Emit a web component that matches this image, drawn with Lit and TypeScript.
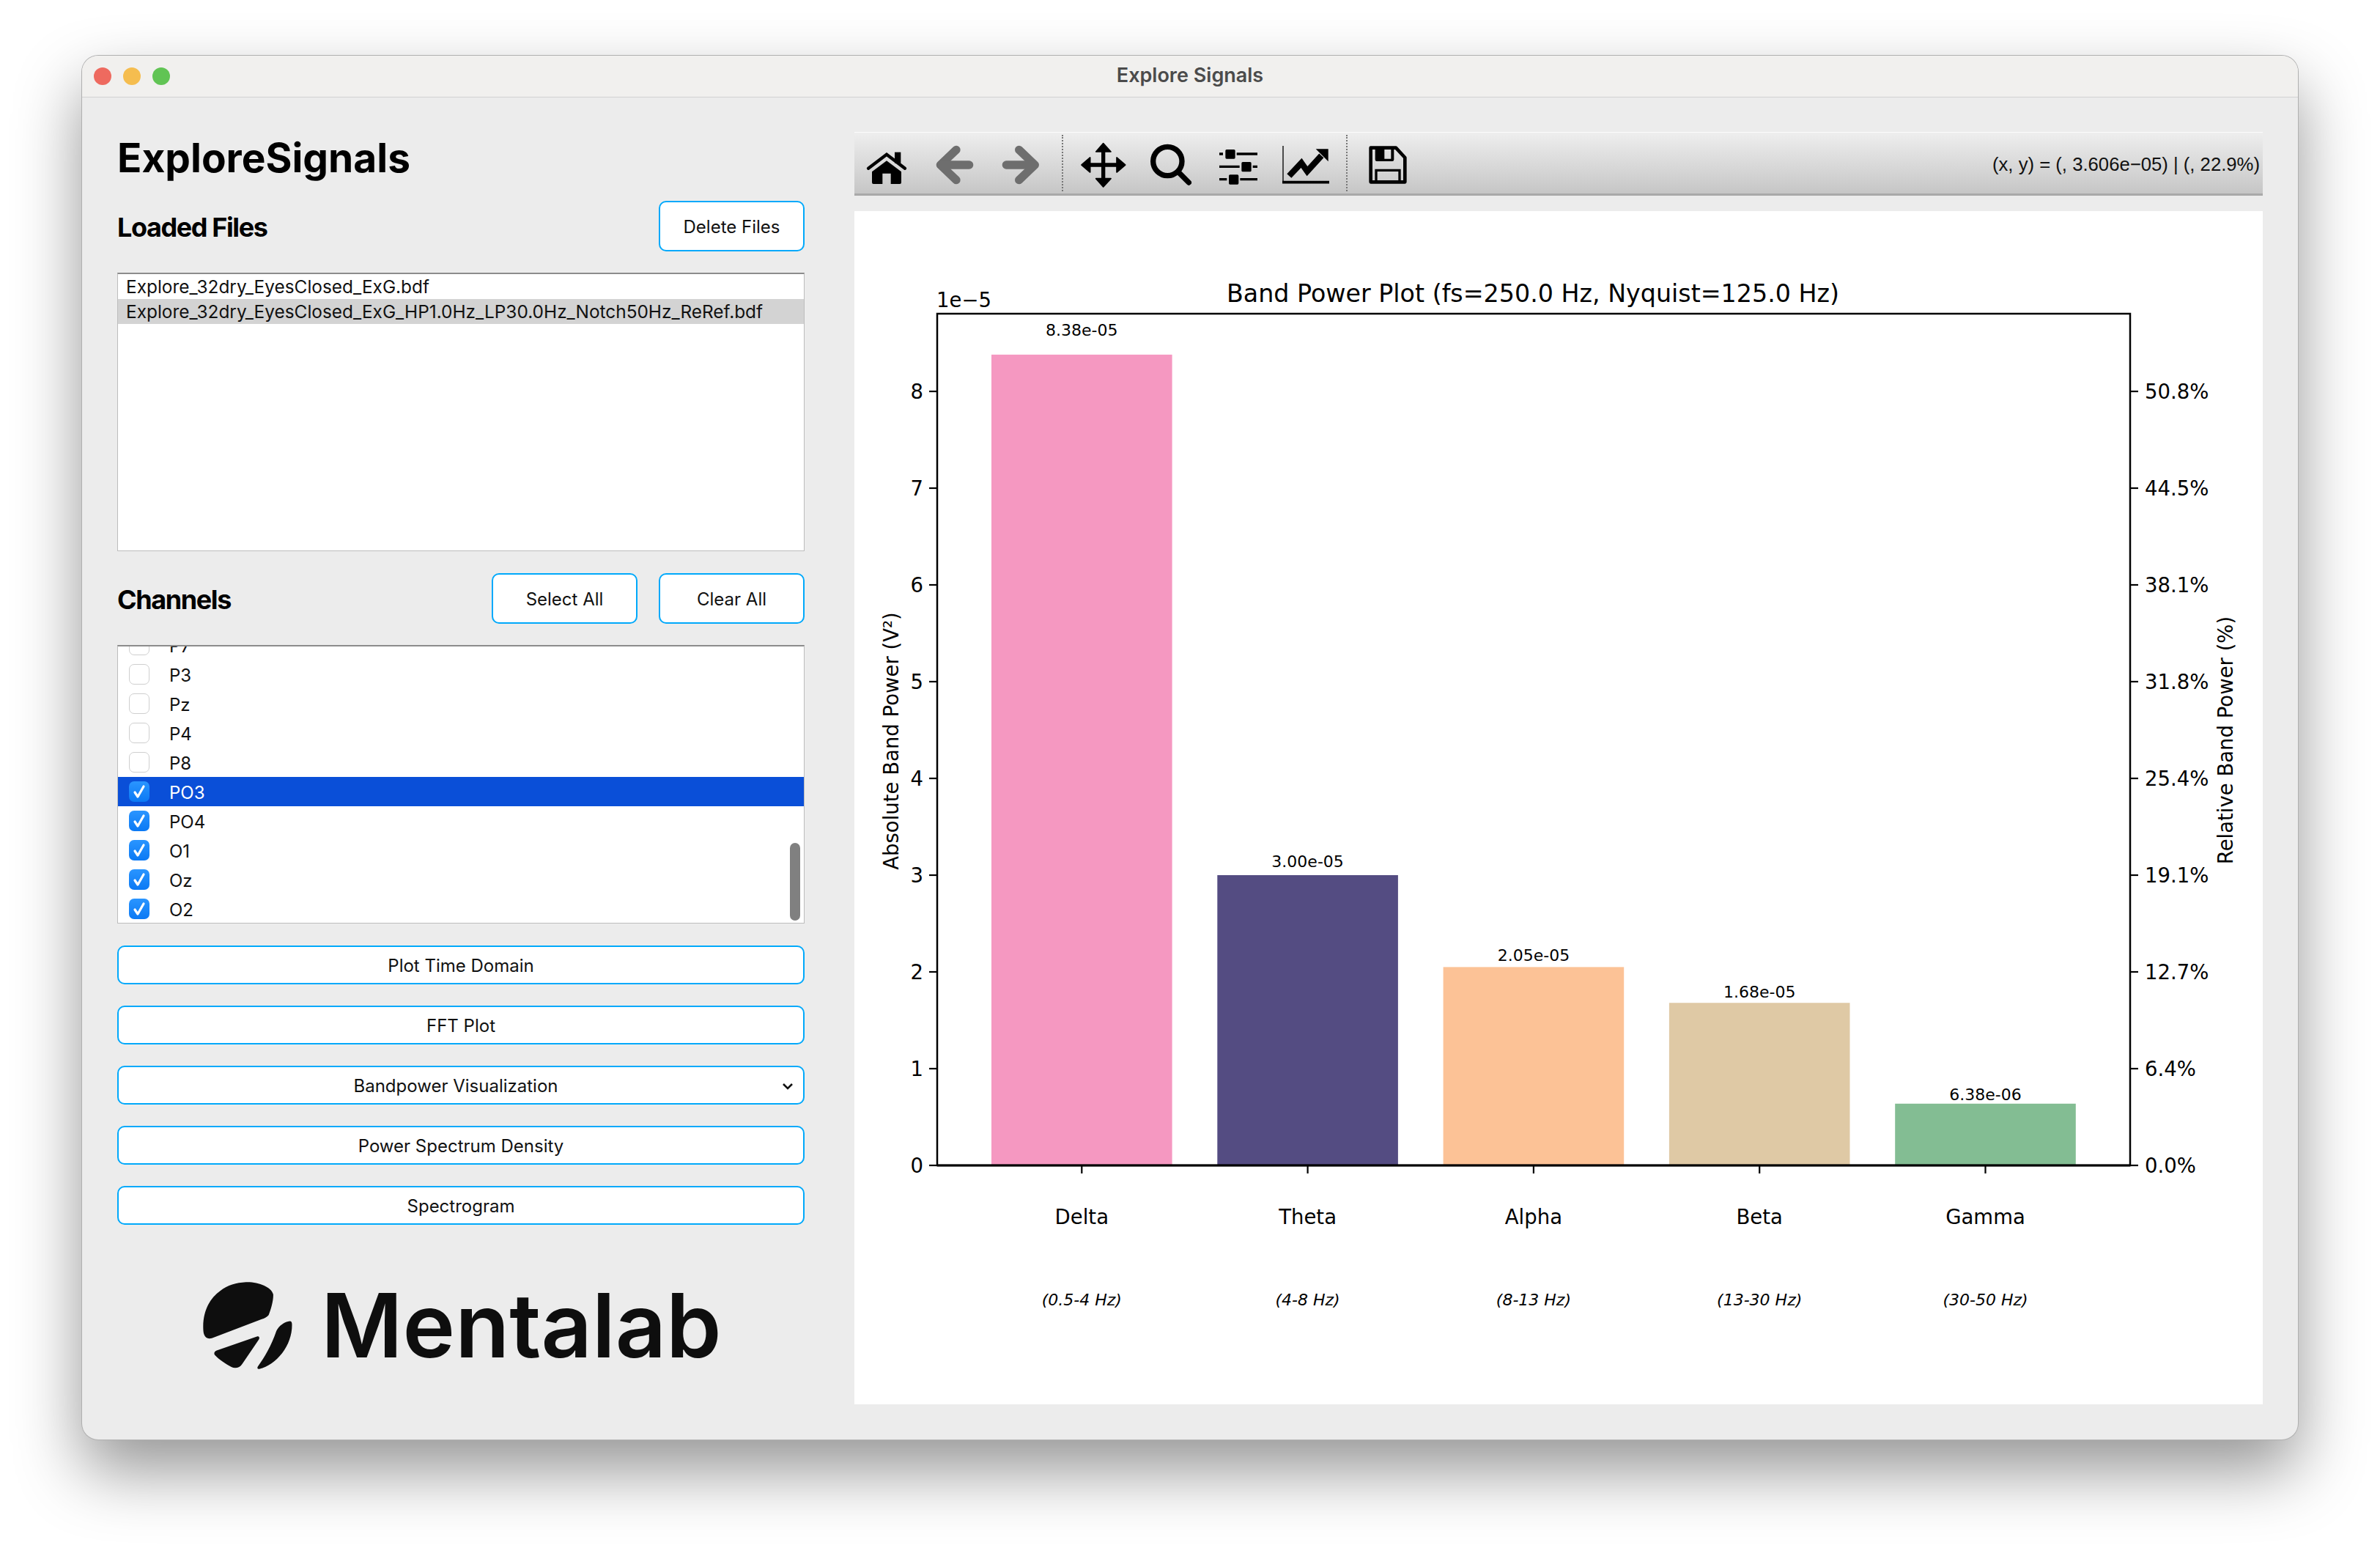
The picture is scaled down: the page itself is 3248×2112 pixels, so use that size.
import { LitElement, html, svg, css } from 'lit';
import { customElement } from 'lit/decorators.js';

const CHANNELS = [
  { name: 'P7', on: false },
  { name: 'P3', on: false },
  { name: 'Pz', on: false },
  { name: 'P4', on: false },
  { name: 'P8', on: false },
  { name: 'PO3', on: true, active: true },
  { name: 'PO4', on: true },
  { name: 'O1', on: true },
  { name: 'Oz', on: true },
  { name: 'O2', on: true },
];

// labelY is where matplotlib left the value text, it isn't a fixed offset from the bar
const BANDS = [
  { name: 'Delta', range: '(0.5-4 Hz)', value: 8.38, text: '8.38e-05', color: '#f598c1', labelY: 161.5 },
  { name: 'Theta', range: '(4-8 Hz)', value: 3.0, text: '3.00e-05', color: '#544c82', labelY: 886.5 },
  { name: 'Alpha', range: '(8-13 Hz)', value: 2.05, text: '2.05e-05', color: '#fcc296', labelY: 1015 },
  { name: 'Beta', range: '(13-30 Hz)', value: 1.68, text: '1.68e-05', color: '#dfc9a5', labelY: 1064.5 },
  { name: 'Gamma', range: '(30-50 Hz)', value: 0.638, text: '6.38e-06', color: '#83bd93', labelY: 1205 },
];

const RIGHT_TICKS = ['0.0%', '6.4%', '12.7%', '19.1%', '25.4%', '31.8%', '38.1%', '44.5%', '50.8%'];

const AX = { left: 113, right: 1741, top: 140, bottom: 1302, unit: 132 };

const tool = (viewBox: string, body: unknown) => html`
  <svg class="tool" viewBox=${viewBox} width="92" height="87">${body}</svg>
`;

@customElement('band-chart')
class BandChart extends LitElement {
  static styles = css`
    :host {
      display: block;
      background: #fff;
      height: 1628px;
    }
    svg {
      display: block;
    }
    text {
      font-family: 'DejaVu Sans', sans-serif;
      fill: #000;
    }
    .tick {
      font-size: 27.5px;
    }
    .title {
      font-size: 33.3px;
    }
    .small {
      font-size: 22px;
    }
    .range {
      font-size: 22px;
      font-style: italic;
    }
  `;

  render() {
    const yTicks = RIGHT_TICKS.map((label, i) => {
      const y = AX.bottom - i * AX.unit;
      return svg`
        <line x1=${AX.left - 11} x2=${AX.left} y1=${y} y2=${y} stroke="#000" stroke-width="2.2" />
        <line x1=${AX.right} x2=${AX.right + 11} y1=${y} y2=${y} stroke="#000" stroke-width="2.2" />
        <text class="tick" x=${AX.left - 19} y=${y + 10} text-anchor="end">${i}</text>
        <text class="tick" x=${AX.right + 20} y=${y + 10}>${label}</text>
      `;
    });
    const bars = BANDS.map((b, i) => {
      const x = 187 + i * 308.3;
      const h = b.value * AX.unit;
      const mid = x + 123.3;
      return svg`
        <rect x=${x} y=${AX.bottom - h} width="246.6" height=${h} fill=${b.color} />
        <text class="small" x=${mid} y=${b.labelY + 8} text-anchor="middle">${b.text}</text>
        <line x1=${mid} x2=${mid} y1=${AX.bottom} y2=${AX.bottom + 11} stroke="#000" stroke-width="2.2" />
        <text class="tick" x=${mid} y=${1382} text-anchor="middle">${b.name}</text>
        <text class="range" x=${mid} y=${1493} text-anchor="middle">${b.range}</text>
      `;
    });
    return html`
      <svg viewBox="0 0 1922 1628" width="1922" height="1628">
        ${bars}
        <rect x=${AX.left} y=${AX.top} width=${AX.right - AX.left} height=${AX.bottom - AX.top}
          fill="none" stroke="#000" stroke-width="2.5" />
        <line x1=${AX.left} x2=${AX.right} y1=${AX.bottom} y2=${AX.bottom} stroke="#000" stroke-width="3" />
        ${yTicks}
        <text class="title" x="926" y="124" text-anchor="middle">Band Power Plot (fs=250.0 Hz, Nyquist=125.0 Hz)</text>
        <text class="tick" x="112" y="131">1e−5</text>
        <text class="tick" transform="translate(60 723) rotate(-90)" text-anchor="middle">Absolute Band Power (V²)</text>
        <text class="tick" transform="translate(1881 722) rotate(-90)" text-anchor="middle">Relative Band Power (%)</text>
      </svg>
    `;
  }
}

@customElement('app-root')
class AppRoot extends LitElement {
  static styles = css`
    :host {
      display: block;
      width: 3248px;
      height: 2112px;
      background: #fff;
      font-family: Inter, 'Liberation Sans', sans-serif;
      color: #111;
    }
    .page {
      padding: 76px 112px 0;
      box-sizing: border-box;
      height: 2112px;
    }
    .window {
      height: 1888px;
      border-radius: 22px;
      background: #ececec;
      box-shadow: 0 0 0 1px #b0b0b0, 0 42px 90px rgba(0, 0, 0, 0.42);
      overflow: hidden;
    }
    .titlebar {
      height: 56px;
      box-sizing: content-box;
      background: #f1f0ee;
      border-bottom: 1px solid #d2d2d2;
      display: flex;
      align-items: center;
      justify-content: center;
      position: relative;
      font-size: 27px;
      font-weight: 600;
      color: #4b4b4b;
    }
    .title-text {
      margin-bottom: 4px;
    }
    .lights {
      position: absolute;
      left: 16px;
      top: 16px;
      display: flex;
      gap: 16px;
    }
    .light {
      width: 24px;
      height: 24px;
      border-radius: 50%;
    }
    .red {
      background: #ee6a5f;
    }
    .amber {
      background: #f5bd4f;
    }
    .green {
      background: #61c454;
    }
    .body {
      display: flex;
      gap: 68px;
      padding: 47px 48px 0 48px;
    }
    .side {
      width: 938px;
      flex: none;
      display: flex;
      flex-direction: column;
    }
    h1 {
      margin: 0;
      height: 94px;
      font-size: 55px;
      line-height: 70px;
      font-weight: 700;
      color: #000;
    }
    .head {
      display: flex;
      align-items: center;
      gap: 29px;
      height: 69px;
      margin-bottom: 29px;
    }
    h2 {
      margin: 0 auto 0 0;
      padding-top: 3px;
      font-size: 36px;
      font-weight: 700;
      letter-spacing: -1.4px;
      color: #000;
    }
    button {
      font: inherit;
      color: #111;
      font-size: 24px;
      background: #fff;
      border: 2px solid #00a9fb;
      border-radius: 10px;
      padding: 2px 0 0;
      cursor: pointer;
    }
    .small-btn {
      width: 199px;
      height: 69px;
    }
    .wide-btn {
      width: 938px;
      height: 53px;
      margin-bottom: 29px;
      position: relative;
    }
    .combo-label {
      display: inline-block;
      transform: translateX(-7px);
    }
    .chevron {
      position: absolute;
      right: 13px;
      top: 21px;
    }
    .list {
      height: 380px;
      background: #fff;
      border: 1px solid #bdbdbd;
      border-top: 2px solid #8c8c8c;
      box-sizing: border-box;
      overflow: hidden;
      position: relative;
    }
    .files {
      margin-bottom: 30px;
    }
    .file {
      height: 34px;
      line-height: 34px;
      padding-left: 11px;
      font-size: 24.4px;
      white-space: nowrap;
    }
    .file.sel {
      background: #d3d3d3;
    }
    .channels {
      margin-bottom: 30px;
    }
    .rows {
      margin-top: -22px;
    }
    .row {
      height: 40px;
      display: flex;
      align-items: center;
      padding-left: 15px;
      gap: 27px;
      font-size: 24px;
    }
    .row span:last-child {
      padding-top: 2px;
    }
    .row.active {
      background: #0a4fd8;
      color: #fff;
    }
    .box {
      width: 28px;
      height: 28px;
      box-sizing: border-box;
      border-radius: 7px;
      background: #fff;
      border: 1px solid #cfcfcf;
      display: block;
      flex: none;
    }
    .box.on {
      border: none;
      background: linear-gradient(#2a95ff, #0b79f4);
    }
    .thumb {
      position: absolute;
      right: 5px;
      top: 268px;
      width: 14px;
      height: 106px;
      border-radius: 7px;
      background: #808080;
    }
    .logo {
      display: flex;
      align-items: center;
      height: 120px;
      margin-top: 48px;
      padding-left: 116px;
      gap: 38px;
    }
    .wordmark {
      font-size: 121px;
      line-height: 120px;
      font-weight: 600;
      color: #0e0e0e;
    }
    .main {
      width: 1922px;
      flex: none;
    }
    .toolbar {
      height: 87px;
      box-sizing: border-box;
      display: flex;
      align-items: center;
      background: linear-gradient(#eeeeee, #c6c6c6);
      border-top: 1px solid #fbfbfb;
      border-bottom: 3px solid #a9a9a9;
      margin-bottom: 21px;
      overflow: hidden;
    }
    .tool {
      display: block;
      flex: none;
      margin-top: 2px;
    }
    .sep {
      flex: none;
      align-self: stretch;
      width: 0;
      border-left: 2px dotted #777;
      margin: 3px 9px 3px 7px;
    }
    .sep.second {
      margin-left: 9px;
    }
    .coords {
      margin-left: auto;
      padding: 4px 4px 0 0;
      font-family: 'Liberation Sans', sans-serif;
      font-size: 25.7px;
      color: #111;
      white-space: nowrap;
    }
  `;

  renderToolbar() {
    return html`
      <div class="toolbar">
        ${tool('-12 -15 276 261', svg`
          <rect x="153" y="68" width="25" height="45" />
          <polyline points="45,134 120,77 195,134" fill="none" stroke="#000" stroke-width="13" stroke-linecap="round" />
          <path d="M120 103 L180 148 V192 Q180 198 174 198 H137 V155 H103 V198 H66 Q60 198 60 192 V148 Z" />
        `)}
        ${tool('264 -15 276 261', svg`
          <g fill="none" stroke="#6e6e6e" stroke-width="34" stroke-linecap="round" stroke-linejoin="round">
            <polyline points="405,58 340,120 405,182" />
            <line x1="345" y1="120" x2="458" y2="120" />
          </g>
        `)}
        ${tool('540 -15 276 261', svg`
          <g fill="none" stroke="#6e6e6e" stroke-width="34" stroke-linecap="round" stroke-linejoin="round">
            <polyline points="662,58 727,120 662,182" />
            <line x1="722" y1="120" x2="610" y2="120" />
          </g>
        `)}
        <div class="sep"></div>
        ${tool('-15 -15 276 261', svg`
          <g stroke="#000" stroke-linejoin="round">
            <line x1="122" y1="50" x2="122" y2="190" stroke-width="16" />
            <line x1="50" y1="120" x2="195" y2="120" stroke-width="16" />
            <g stroke-width="5">
              <polygon points="122,32 153,66 92,66" />
              <polygon points="122,210 153,176 92,176" />
              <polygon points="33,120 68,90 68,150" />
              <polygon points="212,120 177,90 177,150" />
            </g>
          </g>
        `)}
        ${tool('261 -15 276 261', svg`
          <g fill="none" stroke="#000" stroke-width="22" stroke-linecap="round">
            <circle cx="385" cy="105" r="59" />
            <line x1="435" y1="155" x2="472" y2="192" />
          </g>
        `)}
        ${tool('537 -15 276 261', svg`
          <g stroke="#000" stroke-width="10">
            <path d="M597 75 H612 M668 75 H753 M597 127 H680 M734 127 H753 M597 179 H628 M682 179 H753" fill="none" />
          </g>
          <rect x="622" y="57" width="40" height="38" rx="5" />
          <rect x="688" y="108" width="40" height="40" rx="5" />
          <rect x="636" y="160" width="40" height="40" rx="5" />
        `)}
        ${tool('-12 -15 276 261', svg`
          <line x1="33" y1="42" x2="33" y2="190" stroke="#000" stroke-width="4" />
          <line x1="30" y1="191" x2="222" y2="191" stroke="#000" stroke-width="11" />
          <polyline points="58,165 108,112 132,146 190,82" fill="none" stroke="#000" stroke-width="25" />
          <polygon points="167,55 218,55 218,106" />
        `)}
        <div class="sep second"></div>
        ${tool('324 -15 276 261', svg`
          <path d="M392 50 H495 L532 90 V190 H392 Z" fill="none" stroke="#000" stroke-width="14" stroke-linejoin="round" />
          <path fill-rule="evenodd" d="M410 48 H487 V98 Q487 105 480 105 H417 Q410 105 410 98 Z M448 57 V95 H475 V57 Z" />
          <path d="M414 190 V142 H510 V190" fill="none" stroke="#000" stroke-width="10" />
        `)}
        <span class="coords">(x, y) = (, 3.606e−05) | (, 22.9%)</span>
      </div>
    `;
  }

  renderLogo() {
    return html`
      <div class="logo">
        <svg viewBox="36 36 372 364" width="124" height="121" fill="#0e0e0e">
          <path d="M215 40 C265 38 320 60 327 90 C328 115 318 150 308 175 C300 185 290 188 280 192 L75 270 C55 275 42 265 40 240 C35 170 60 110 110 75 C140 52 175 42 215 40 Z" />
          <path d="M262 262 C270 262 272 268 268 275 L200 375 C190 392 170 396 155 388 C130 375 105 358 88 340 C82 332 85 324 95 320 Z" />
          <path d="M395 200 C402 200 404 205 404 215 C405 300 340 380 270 396 C262 398 260 392 264 386 C290 350 320 300 340 240 C350 218 375 202 395 200 Z" />
        </svg>
        <span class="wordmark">Mentalab</span>
      </div>
    `;
  }

  render() {
    return html`
      <div class="page">
        <div class="window">
          <div class="titlebar">
            <div class="lights">
              <span class="light red"></span>
              <span class="light amber"></span>
              <span class="light green"></span>
            </div>
            <span class="title-text">Explore Signals</span>
          </div>
          <div class="body">
            <div class="side">
              <h1>ExploreSignals</h1>
              <div class="head">
                <h2>Loaded Files</h2>
                <button class="small-btn">Delete Files</button>
              </div>
              <div class="list files">
                <div class="file">Explore_32dry_EyesClosed_ExG.bdf</div>
                <div class="file sel">Explore_32dry_EyesClosed_ExG_HP1.0Hz_LP30.0Hz_Notch50Hz_ReRef.bdf</div>
              </div>
              <div class="head">
                <h2>Channels</h2>
                <button class="small-btn">Select All</button>
                <button class="small-btn">Clear All</button>
              </div>
              <div class="list channels">
                <div class="rows">
                  ${CHANNELS.map(c => html`
                    <div class="row ${c.active ? 'active' : ''}">
                      ${c.on
                        ? html`<svg class="box on" viewBox="0 0 28 28">
                            <polyline points="8,15 12,21 20,7" fill="none" stroke="#fff" stroke-width="3.2" stroke-linecap="round" stroke-linejoin="round" />
                          </svg>`
                        : html`<span class="box"></span>`}
                      <span>${c.name}</span>
                    </div>
                  `)}
                </div>
                <div class="thumb"></div>
              </div>
              <button class="wide-btn">Plot Time Domain</button>
              <button class="wide-btn">FFT Plot</button>
              <button class="wide-btn">
                <span class="combo-label">Bandpower Visualization</span>
                <svg class="chevron" viewBox="0 0 16 10" width="16" height="10">
                  <polyline points="2,2 8,8 14,2" fill="none" stroke="#111" stroke-width="2.6" />
                </svg>
              </button>
              <button class="wide-btn">Power Spectrum Density</button>
              <button class="wide-btn">Spectrogram</button>
              ${this.renderLogo()}
            </div>
            <div class="main">
              ${this.renderToolbar()}
              <band-chart></band-chart>
            </div>
          </div>
        </div>
      </div>
    `;
  }
}
